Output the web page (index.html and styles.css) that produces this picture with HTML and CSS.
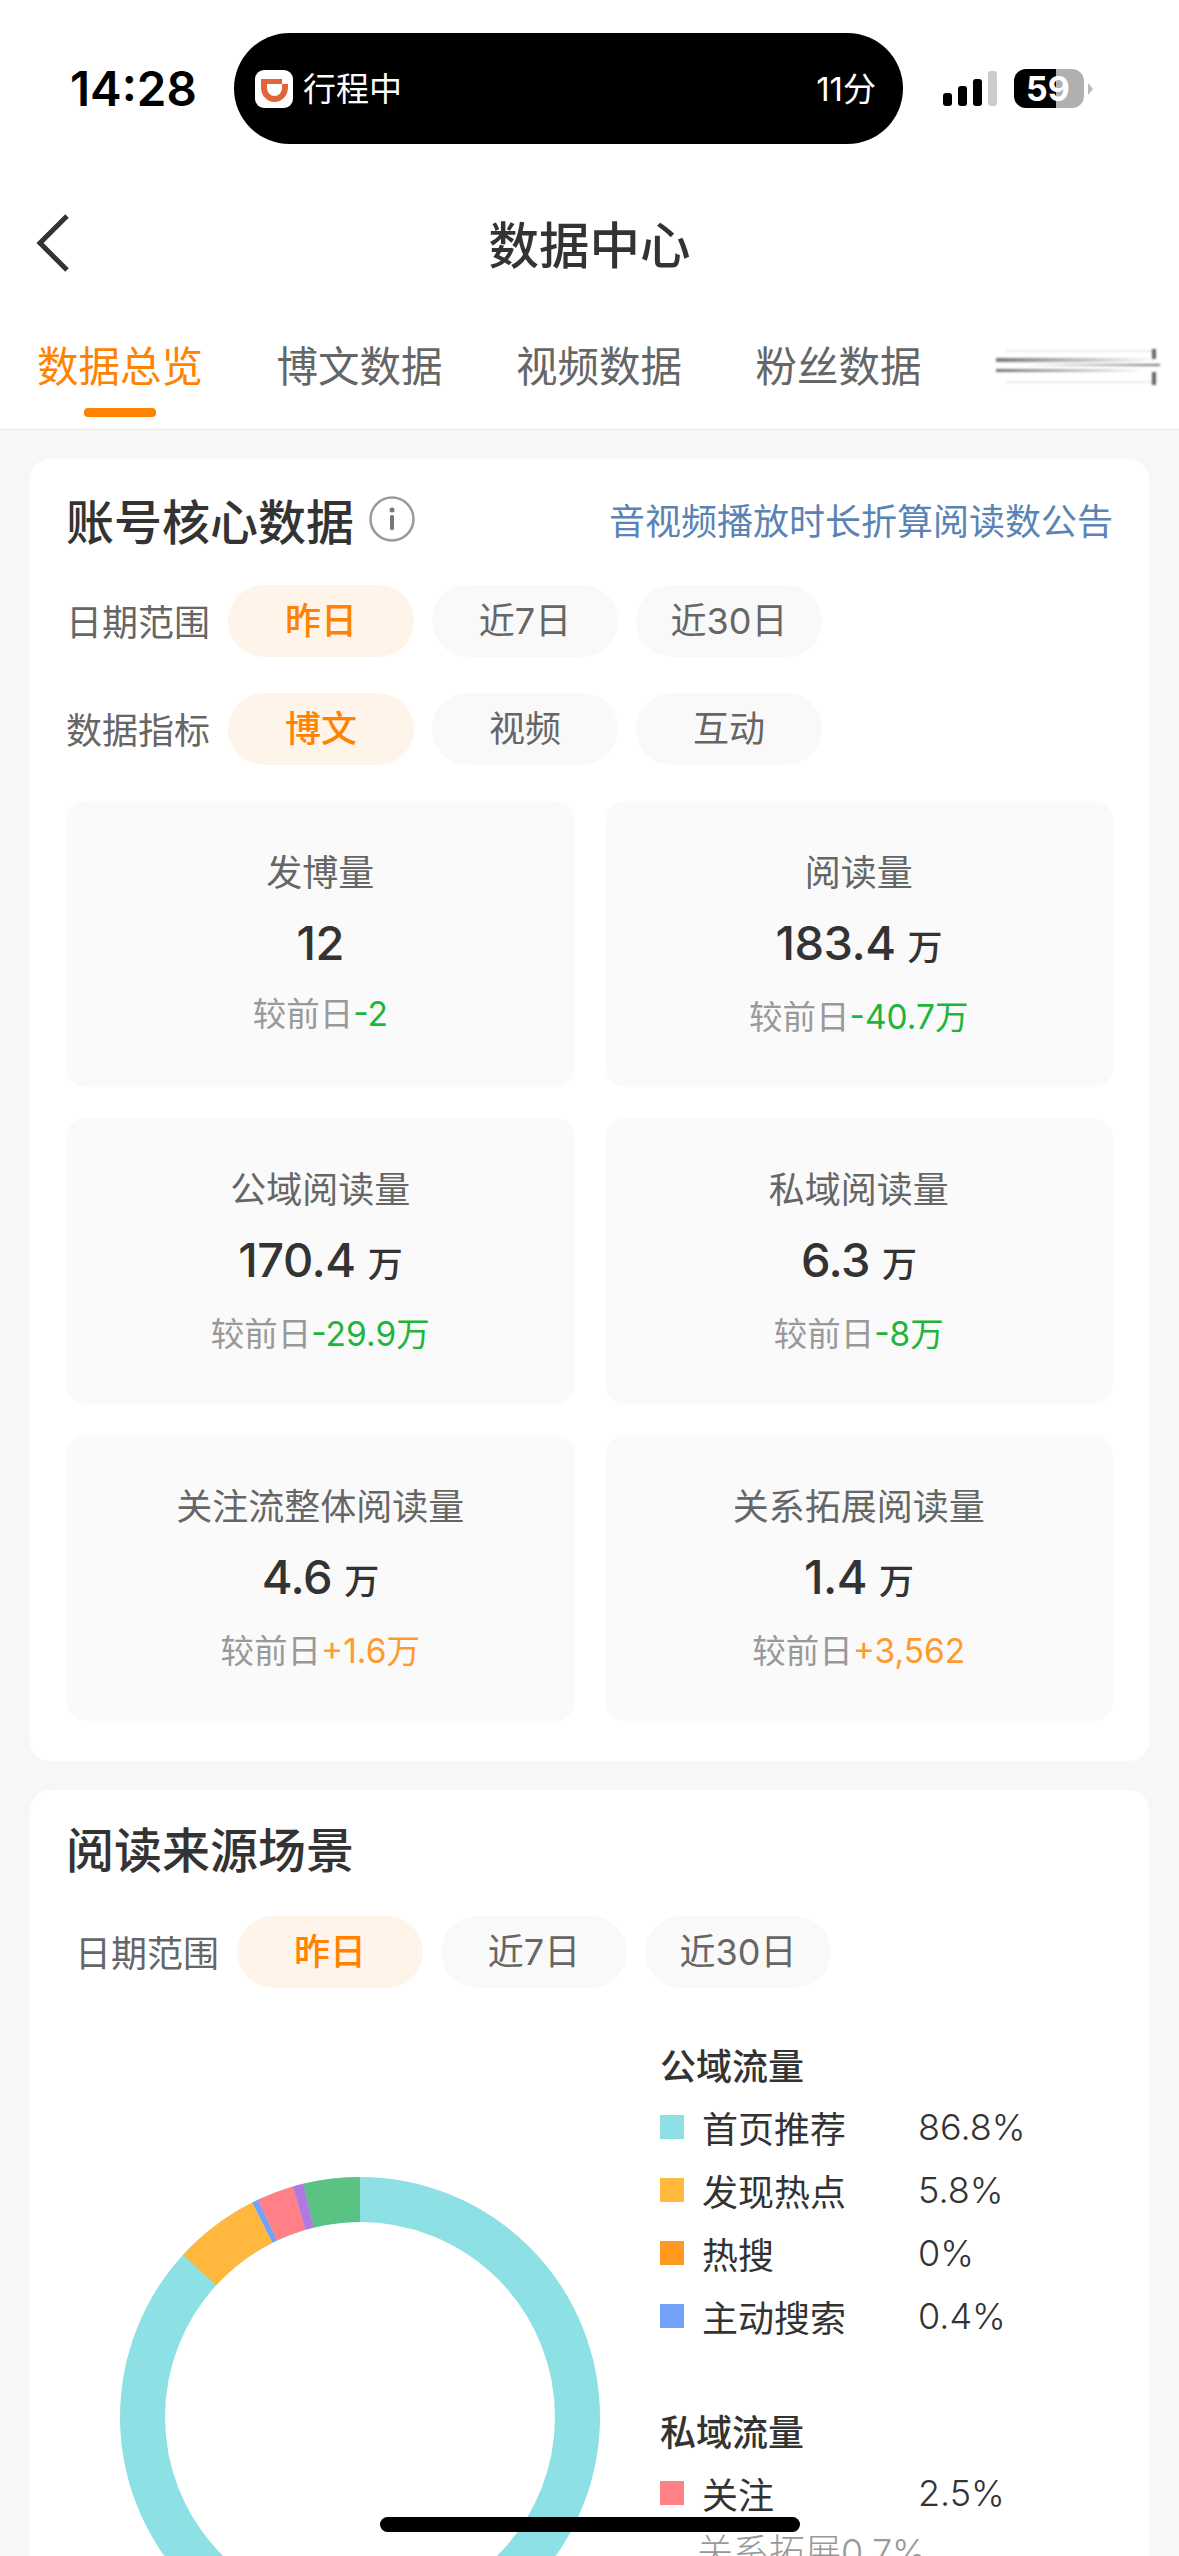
FILE: index.html
```html
<!DOCTYPE html>
<html lang="zh-CN">
<head>
<meta charset="UTF-8" />
<meta name="viewport" content="width=device-width, initial-scale=1" />
<title>数据中心</title>
<link rel="stylesheet" href="styles.css">
</head>
<body>

<div class="phone">
  <header class="top">
    <div class="status">
      <span class="time">14:28</span>
      <div class="island">
        <svg class="didi" viewBox="0 0 38 38">
          <rect width="38" height="38" rx="9" fill="#fff"/>
          <path fill="#e2643c" fill-rule="evenodd" d="M6 9H27V14H33V17.500A13.500 14.500 0 0 1 6 17.500ZM12 14V18A7.500 8 0 0 0 27 18V14Z"/>
        </svg>
        <span class="trip">行程中</span>
        <span class="mins">11分</span>
      </div>
      <div class="signal">
        <i class="bar b1"></i><i class="bar b2"></i><i class="bar b3"></i><i class="bar b4"></i>
      </div>
      <div class="battery">59</div>
      <i class="battery-nub"></i>
    </div>

    <div class="nav">
      <svg class="back" viewBox="0 0 34 58"><polyline points="31,2 4,29 31,56" fill="none" stroke="#333" stroke-width="5"/></svg>
      <h1>数据中心</h1>
    </div>

    <div class="tabs">
      <div class="tab active">数据总览<i class="tab-line"></i></div>
      <div class="tab">博文数据</div>
      <div class="tab">视频数据</div>
      <div class="tab">粉丝数据</div>
      <svg class="tab-blur" viewBox="0 0 164 40">
        <defs>
          <linearGradient id="fadeR"><stop offset="0" stop-color="#777"/><stop offset="1" stop-color="#777" stop-opacity="0"/></linearGradient>
          <linearGradient id="fadeL"><stop offset="0" stop-color="#777" stop-opacity="0"/><stop offset="1" stop-color="#777"/></linearGradient>
        </defs>
        <rect x="10" y="3" width="150" height="2" fill="#ececec"/>
        <rect x="0" y="11" width="160" height="4" fill="url(#fadeR)"/>
        <rect x="30" y="17" width="134" height="2" fill="url(#fadeL)"/>
        <rect x="0" y="22" width="150" height="3" fill="url(#fadeR)"/>
        <rect x="10" y="34" width="150" height="2" fill="#ececec"/>
        <path d="M156 2h4v10h-4zM156 25h4v13h-4z" fill="#666"/>
      </svg>
    </div>
  </header>

  <main class="content">
    <section class="card">
      <div class="card-head">
        <div class="head-left">
          <h2>账号核心数据</h2>
          <svg class="info" viewBox="0 0 46 46">
            <circle cx="23" cy="23" r="21.500" fill="none" stroke="#999" stroke-width="2.500"/>
            <circle cx="23" cy="14" r="2.500" fill="#777"/>
            <rect x="21" y="19" width="4" height="15" rx="1.500" fill="#777"/>
          </svg>
        </div>
        <a class="notice">音视频播放时长折算阅读数公告</a>
      </div>

      <div class="filter">
        <span class="filter-name">日期范围</span>
        <span class="pill on">昨日</span>
        <span class="pill">近7日</span>
        <span class="pill">近30日</span>
      </div>
      <div class="filter">
        <span class="filter-name">数据指标</span>
        <span class="pill on">博文</span>
        <span class="pill">视频</span>
        <span class="pill">互动</span>
      </div>

      <div class="stats">
        <div class="stat">
          <div class="stat-name">发博量</div>
          <div class="stat-num">12</div>
          <div class="stat-diff">较前日<span class="down">-2</span></div>
        </div>
        <div class="stat">
          <div class="stat-name">阅读量</div>
          <div class="stat-num">183.4 <small>万</small></div>
          <div class="stat-diff">较前日<span class="down">-40.7万</span></div>
        </div>
        <div class="stat">
          <div class="stat-name">公域阅读量</div>
          <div class="stat-num">170.4 <small>万</small></div>
          <div class="stat-diff">较前日<span class="down">-29.9万</span></div>
        </div>
        <div class="stat">
          <div class="stat-name">私域阅读量</div>
          <div class="stat-num">6.3 <small>万</small></div>
          <div class="stat-diff">较前日<span class="down">-8万</span></div>
        </div>
        <div class="stat">
          <div class="stat-name">关注流整体阅读量</div>
          <div class="stat-num">4.6 <small>万</small></div>
          <div class="stat-diff">较前日<span class="up">+1.6万</span></div>
        </div>
        <div class="stat">
          <div class="stat-name">关系拓展阅读量</div>
          <div class="stat-num">1.4 <small>万</small></div>
          <div class="stat-diff">较前日<span class="up">+3,562</span></div>
        </div>
      </div>
    </section>

    <section class="card card-source">
      <div class="card-head">
        <h2>阅读来源场景</h2>
      </div>
      <div class="filter indent">
        <span class="filter-name">日期范围</span>
        <span class="pill on">昨日</span>
        <span class="pill">近7日</span>
        <span class="pill">近30日</span>
      </div>

      <div class="chart">
        <svg class="donut" viewBox="0 0 480 480">
          <g transform="rotate(-90 240 240)" fill="none" stroke-width="45">
            <circle cx="240" cy="240" r="217.500" pathLength="100" stroke="#8de0e3"/>
            <circle cx="240" cy="240" r="217.500" pathLength="100" stroke="#ffb73d" stroke-dasharray="5.800 100" stroke-dashoffset="-86.800"/>
            <circle cx="240" cy="240" r="217.500" pathLength="100" stroke="#72a1fa" stroke-dasharray="0.400 100" stroke-dashoffset="-92.600"/>
            <circle cx="240" cy="240" r="217.500" pathLength="100" stroke="#ff8087" stroke-dasharray="2.500 100" stroke-dashoffset="-93"/>
            <circle cx="240" cy="240" r="217.500" pathLength="100" stroke="#b078e0" stroke-dasharray="0.700 100" stroke-dashoffset="-95.500"/>
            <circle cx="240" cy="240" r="217.500" pathLength="100" stroke="#5ac283" stroke-dasharray="3.800 100" stroke-dashoffset="-96.200"/>
          </g>
        </svg>

        <div class="legend">
          <div class="legend-title">公域流量</div>
          <div class="legend-row"><i class="swatch c1"></i><span class="legend-name">首页推荐</span><span>86.8%</span></div>
          <div class="legend-row"><i class="swatch c2"></i><span class="legend-name">发现热点</span><span>5.8%</span></div>
          <div class="legend-row"><i class="swatch c3"></i><span class="legend-name">热搜</span><span>0%</span></div>
          <div class="legend-row"><i class="swatch c4"></i><span class="legend-name">主动搜索</span><span>0.4%</span></div>
          <div class="legend-title second">私域流量</div>
          <div class="legend-row"><i class="swatch c5"></i><span class="legend-name">关注</span><span>2.5%</span></div>
          <div class="legend-row muted">关系拓展0.7%</div>
        </div>
      </div>
    </section>
  </main>

  <div class="home-bar"></div>
</div>

</body>
</html>
```

FILE: styles.css
```css
* {
  box-sizing: border-box;
}
html, body {
  margin: 0;
  padding: 0;
}
body {
  font-family: Inter, "Noto Sans CJK SC", sans-serif;
  background: #f7f7f7;
  color: #333;
}
.phone {
  position: relative;
  width: 1179px;
  height: 2556px;
  overflow: hidden;
}
i {
  display: block;
}

/* status bar */
.top {
  height: 430px;
  padding-top: 33px;
  border-bottom: 1px solid #e8e8e8;
  background: #fff;
}
.status {
  display: flex;
  align-items: center;
  height: 111px;
  padding-left: 70px;
}
.time {
  width: 164px;
  font-size: 47.500px;
  font-weight: 600;
  color: #000;
}
.island {
  display: flex;
  align-items: center;
  width: 669px;
  height: 111px;
  padding: 0 27px 0 21px;
  border-radius: 56px;
  background: #000;
  color: #fff;
  font-size: 33px;
}
.didi {
  width: 38px;
  height: 38px;
  margin-right: 10px;
}
.trip {
  flex: 1;
  padding-bottom: 3px;
}
.mins {
  padding-bottom: 3px;
}
.signal {
  display: flex;
  align-items: flex-end;
  gap: 6px;
  height: 35px;
  margin: 0 17px 0 40px;
}
.bar {
  width: 9px;
  border-radius: 3px;
  background: #000;
}
.b1 { height: 13px; }
.b2 { height: 20px; }
.b3 { height: 27px; }
.b4 { height: 35px; background: #ccc; }
.battery {
  width: 70px;
  height: 39px;
  padding-right: 2px;
  border-radius: 12px;
  background: linear-gradient(90deg, #000 42px, #b0b0b0 42px);
  color: #fff;
  font-size: 34px;
  font-weight: 700;
  line-height: 39px;
  text-align: center;
}
.battery-nub {
  width: 0;
  height: 0;
  margin-left: 4px;
  border-left: 5px solid #b8b8b8;
  border-top: 6px solid transparent;
  border-bottom: 6px solid transparent;
}

/* nav */
.nav {
  display: grid;
  grid-template-columns: 1fr auto 1fr;
  align-items: center;
  height: 120px;
  margin-top: 39px;
  padding-left: 36px;
}
.back {
  width: 34px;
  height: 58px;
}
.nav h1 {
  margin: 0;
  padding: 0 36px 2px 0;
  font-size: 50.500px;
  font-weight: 500;
  color: #333;
}

/* tabs */
.tabs {
  display: flex;
  align-items: flex-start;
  gap: 73.500px;
  padding: 34px 0 0 37px;
  font-size: 41.500px;
  line-height: 60px;
  color: #666;
  white-space: nowrap;
}
.tab {
  display: flex;
  flex-direction: column;
  align-items: center;
}
.tab.active {
  color: #ff8200;
}
.tab-line {
  width: 72px;
  height: 9px;
  margin-top: 11px;
  border-radius: 4px;
  background: #ff8200;
}
.tab-blur {
  width: 164px;
  height: 40px;
  margin: 10px 0 0 1px;
  filter: blur(1.2px);
}

/* cards */
.content {
  display: flex;
  flex-direction: column;
  gap: 29px;
  padding: 29px 30px 0;
}
.card {
  padding: 30px 36px 40px;
  border-radius: 20px;
  background: #fff;
}
.card-head {
  display: flex;
  justify-content: space-between;
  align-items: center;
  height: 60px;
  margin-bottom: 36px;
}
.card-source {
  padding-top: 27px;
}
.card-source .card-head {
  margin-bottom: 39px;
}
.head-left {
  display: flex;
  align-items: center;
  gap: 15px;
}
h2 {
  margin: 0;
  font-size: 48px;
  font-weight: 500;
  color: #333;
}
.info {
  width: 46px;
  height: 46px;
}
.notice {
  font-size: 36px;
  color: #5a84b4;
}

/* filters */
.filter {
  display: flex;
  align-items: center;
  gap: 18px;
  height: 72px;
  margin-bottom: 36px;
  font-size: 36px;
  color: #666;
}
.filter.indent {
  margin-bottom: 0;
  padding-left: 9px;
}
.filter-name {
  width: 144px;
  padding-bottom: 2px;
  white-space: nowrap;
}
.pill {
  width: 186px;
  height: 72px;
  border-radius: 36px;
  background: #f9f9f9;
  line-height: 72px;
  text-align: center;
}
.pill.on {
  background: #fff4e9;
  color: #ff8200;
  font-weight: 500;
}

/* stat grid */
.stats {
  display: grid;
  grid-template-columns: 1fr 1fr;
  grid-auto-rows: 286px;
  gap: 31px 30px;
}
.stat {
  padding-top: 47px;
  border-radius: 20px;
  background: #fafafa;
  text-align: center;
}
.stat-name {
  font-size: 36px;
  line-height: 50px;
  color: #666;
}
.stat-num {
  height: 60px;
  margin-top: 15px;
  font-size: 47px;
  font-weight: 500;
  letter-spacing: -0.5px;
  line-height: 60px;
  color: #333;
}
.stat-num:has(small) {
  height: 63px;
}
.stat-num small {
  font-size: 35px;
  font-weight: 500;
}
.stat-diff {
  margin-top: 16px;
  font-size: 33.500px;
  line-height: 50px;
  color: #999;
}
.down {
  color: #1fb53b;
}
.up {
  color: #ff9a2e;
}

/* reading source chart */
.chart {
  display: flex;
  align-items: flex-start;
  margin-top: 54px;
}
.donut {
  flex: none;
  width: 480px;
  height: 480px;
  margin: 135px 60px 0 54px;
}
.legend {
  font-size: 36px;
  color: #333;
}
.legend-title {
  margin-bottom: 3px;
  line-height: 50px;
  font-weight: 500;
}
.legend-title.second {
  margin-top: 61px;
}
.legend-row {
  display: flex;
  align-items: center;
  height: 63px;
  font-weight: 300;
}
.legend-name {
  width: 216px;
  font-weight: 400;
}
.swatch {
  flex: none;
  width: 24px;
  height: 24px;
  margin-right: 18px;
}
.c1 { background: #8de0e3; }
.c2 { background: #ffb73d; }
.c3 { background: #ff9a1f; }
.c4 { background: #72a1fa; }
.c5 { background: #ff8087; }
.legend-row.muted {
  height: 50px;
  padding-left: 37px;
  color: #999;
  white-space: nowrap;
}

.home-bar {
  position: absolute;
  left: 380px;
  top: 2517px;
  width: 420px;
  height: 15px;
  border-radius: 8px;
  background: #000;
}
```
